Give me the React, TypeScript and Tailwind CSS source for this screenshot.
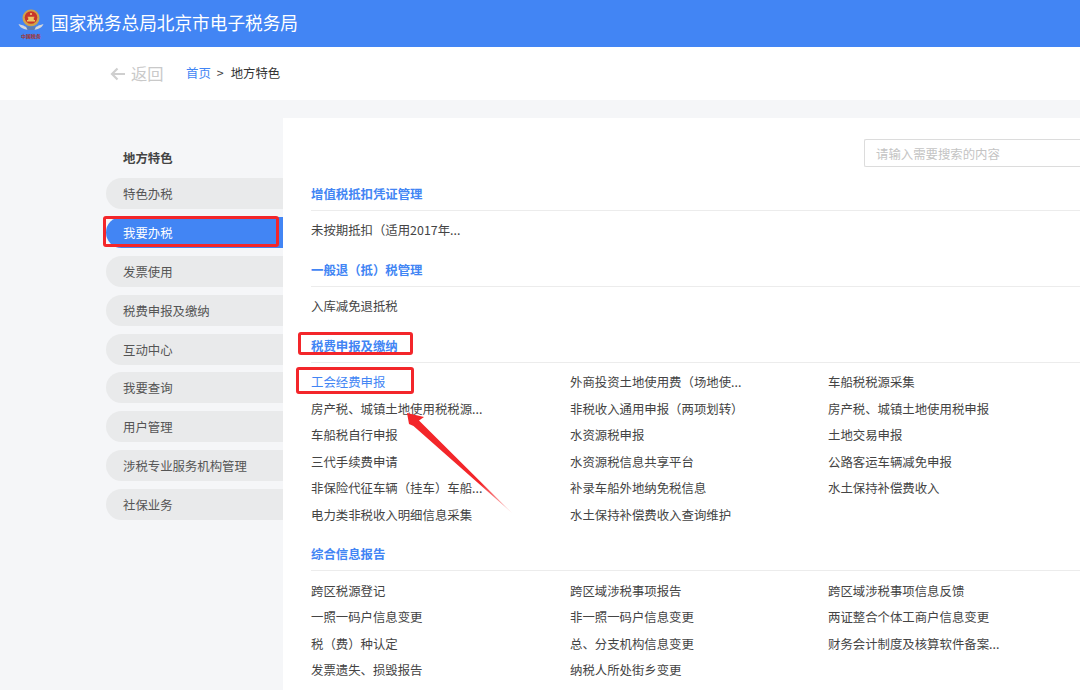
import React from "react";

const font = { fontFamily: '"Noto Sans CJK SC", "Noto Sans", sans-serif' };

const side = ["特色办税", "我要办税", "发票使用", "税费申报及缴纳", "互动中心", "我要查询", "用户管理", "涉税专业服务机构管理", "社保业务"];

const sections: { title: string; items: string[]; active?: string }[] = [
  { title: "增值税抵扣凭证管理", items: ["未按期抵扣（适用2017年..."] },
  { title: "一般退（抵）税管理", items: ["入库减免退抵税"] },
  {
    title: "税费申报及缴纳",
    active: "工会经费申报",
    items: [
      "工会经费申报", "外商投资土地使用费（场地使...", "车船税税源采集",
      "房产税、城镇土地使用税税源...", "非税收入通用申报（两项划转）", "房产税、城镇土地使用税申报",
      "车船税自行申报", "水资源税申报", "土地交易申报",
      "三代手续费申请", "水资源税信息共享平台", "公路客运车辆减免申报",
      "非保险代征车辆（挂车）车船...", "补录车船外地纳免税信息", "水土保持补偿费收入",
      "电力类非税收入明细信息采集", "水土保持补偿费收入查询维护",
    ],
  },
  {
    title: "综合信息报告",
    items: [
      "跨区税源登记", "跨区域涉税事项报告", "跨区域涉税事项信息反馈",
      "一照一码户信息变更", "非一照一码户信息变更", "两证整合个体工商户信息变更",
      "税（费）种认定", "总、分支机构信息变更", "财务会计制度及核算软件备案...",
      "发票遗失、损毁报告", "纳税人所处街乡变更",
    ],
  },
];

function Emblem() {
  return (
    <svg width="26" height="32" viewBox="0 0 26 32" className="shrink-0">
      <path d="M0.500 16c1.500 3.500 5 6 12.500 6s11-2.500 12.500-6c-1.500 .5-3 1-5 1.500-1.500 1.500-4.500 2-7.500 2s-6-.5-7.500-2c-2-.5-3.500-1-5-1.500z" fill="#d4d7dc" />
      <circle cx="13" cy="10" r="8.500" fill="#cfa24a" />
      <circle cx="13" cy="9.500" r="6.300" fill="#c8352b" />
      <path d="M9 12h8v1.600H9zM10.200 9.500h5.600V12h-5.600zM9.600 8.800h6.800v.8H9.600z" fill="#ecc864" />
      <circle cx="13" cy="6" r="1" fill="#f3d675" />
      <path d="M8 18.500h10l-1.500 3.500h-7z" fill="#5b7db4" />
      <text x="13" y="30" textAnchor="middle" fontSize="5" fontWeight="700" fill="#a5332c">中国税务</text>
    </svg>
  );
}

function Annotations() {
  return (
    <>
      <div className="absolute left-[103px] top-[216px] w-[176px] h-[31px] border-[3px] border-[#f3262a] rounded-[3px]" />
      <div className="absolute left-[298px] top-[332px] w-[115px] h-[23px] border-[3px] border-[#f3262a] rounded-[3px]" />
      <div className="absolute left-[296px] top-[367px] w-[118px] h-[27px] border-[3px] border-[#f3262a] rounded-[3px]" />
      <svg className="absolute left-[400px] top-[405px]" width="116" height="112" viewBox="0 0 116 112">
        <defs>
          <linearGradient id="arrowFade" x1="7" y1="8" x2="112" y2="108" gradientUnits="userSpaceOnUse">
            <stop offset="0" stopColor="#f3262a" />
            <stop offset="0.7" stopColor="#f3262a" />
            <stop offset="1" stopColor="#f3262a" stopOpacity="0.15" />
          </linearGradient>
        </defs>
        <path d="M7 8 L24 12 L19 15.500 L112 108 L13.500 21 L9 19 Z" fill="url(#arrowFade)" />
      </svg>
    </>
  );
}

export default function App() {
  return (
    <div className="relative w-[1080px] h-[690px] overflow-hidden bg-[#f5f6f8] text-[12.4px] text-[#444]" style={font}>
      <header className="h-[47px] bg-[#4285f4] flex items-center pl-[18px] gap-[7px]">
        <Emblem />
        <span className="text-[17.65px] text-white">国家税务总局北京市电子税务局</span>
      </header>
      <div className="h-[53px] bg-white flex items-center pl-[110px]">
        <span className="flex items-center gap-[5px] text-[16.300px] text-[#c9c9c9] w-[76px]">
          <svg width="16" height="14" viewBox="0 0 16 14" fill="none" stroke="#cfcfcf" strokeWidth="2.2">
            <path d="M15 7H2M7.500 1.500 2 7l5.500 5.500" />
          </svg>
          返回
        </span>
        <span className="text-[#4285f4]">首页</span>
        <span className="ml-[6px] mr-[7px] text-[#444]">&gt;</span>
        <span className="text-[#333]">地方特色</span>
      </div>
      <div className="flex pt-[18px]">
        <aside className="w-[283px] shrink-0 pl-[106px] pt-[30px]">
          <div className="pl-[17px] h-[20px] leading-[21px] font-bold text-[#444]">地方特色</div>
          <ul className="mt-[10px] flex flex-col gap-[7.900px]">
            {side.map((s) => (
              <li
                key={s}
                className={
                  "h-[31px] leading-[32px] pl-[17px] rounded-l-[16px] " +
                  (s === "我要办税" ? "bg-[#4285f4] text-white" : "bg-[#e9eaeb] text-[#555]")
                }
              >
                {s}
              </li>
            ))}
          </ul>
        </aside>
        <main className="flex-1 min-w-0 bg-white h-[572px] pl-[28px] pt-[21px]">
          <div className="flex justify-end mb-[10.500px]">
            <div className="w-[216px] h-[28px] border border-r-0 border-[#dcdcdc] rounded-l-[2px] pl-[11px] leading-[28px] text-[#c4c4c4]">
              请输入需要搜索的内容
            </div>
          </div>
          {sections.map((sec) => (
            <section key={sec.title} className="mb-[10px]">
              <h2 className="h-[33px] leading-[33px] font-bold text-[#4285f4] border-b border-[#ececec]">{sec.title}</h2>
              <div className="grid grid-cols-[259px_258px_1fr] pt-[6.500px]">
                {sec.items.map((it) => (
                  <div key={it} className={"h-[26.500px] leading-[26.500px] whitespace-nowrap " + (it === sec.active ? "text-[#4285f4]" : "")}>
                    {it}
                  </div>
                ))}
              </div>
            </section>
          ))}
        </main>
      </div>
      <Annotations />
    </div>
  );
}
